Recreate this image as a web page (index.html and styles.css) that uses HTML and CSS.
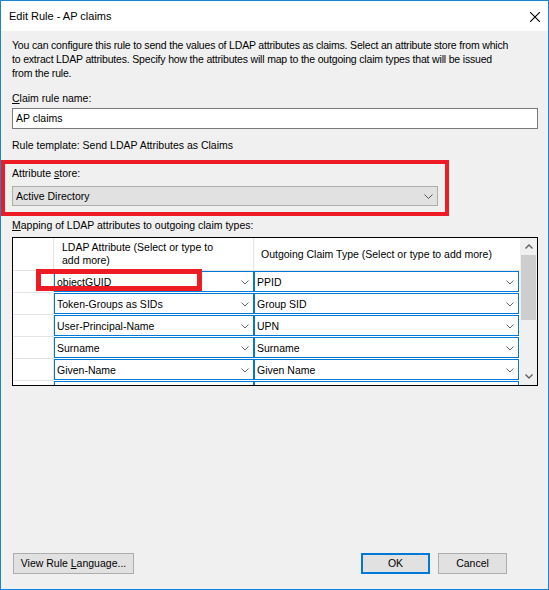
FILE: index.html
```html
<!DOCTYPE html>
<html>
<head>
<meta charset="utf-8">
<title>Edit Rule - AP claims</title>
<link rel="stylesheet" href="styles.css">
</head>
<body>
<div class="window">
  <div class="titlebar">
    <span class="title">Edit Rule - AP claims</span>
    <svg class="close" width="10" height="10" viewBox="0 0 10 10"><path d="M0 0L10 10M10 0L0 10" stroke="#000" stroke-width="1.1" fill="none"/></svg>
  </div>
  <div class="content">
    <p class="desc">You can configure this rule to send the values of LDAP attributes as claims. Select an attribute store from which<br>to extract LDAP attributes. Specify how the attributes will map to the outgoing claim types that will be issued<br>from the rule.</p>
    <div class="label label-name"><u>C</u>laim rule name:</div>
    <div class="textbox">AP claims</div>
    <div class="label label-template">Rule template: Send LDAP Attributes as Claims</div>
    <div class="store-group">
      <div class="label">Attribute <u>s</u>tore:</div>
      <div class="combo"><span>Active Directory</span><svg class="chev" width="9" height="5" viewBox="0 0 9 5"><path d="M0.5 0.5L4.5 4.5L8.5 0.5" stroke="#555" fill="none"/></svg></div>
      <div class="highlight hl-store"></div>
    </div>
    <div class="label label-map"><u>M</u>apping of LDAP attributes to outgoing claim types:</div>
    <div class="grid">
      <div class="grid-main">
        <div class="grid-head">
          <div class="rowhead"></div>
          <div class="colhead col1">LDAP Attribute (Select or type to add more)</div>
          <div class="colhead col2">Outgoing Claim Type (Select or type to add more)</div>
        </div>
        <div class="grid-row">
          <div class="rowhead"></div>
          <div class="cell col1"><span>objectGUID</span><svg class="chev-s" width="8" height="5" viewBox="0 0 8 5"><path d="M0.5 0.5L4 4L7.5 0.5" stroke="#666" fill="none"/></svg></div>
          <div class="cell col2"><span>PPID</span><svg class="chev-s" width="8" height="5" viewBox="0 0 8 5"><path d="M0.5 0.5L4 4L7.5 0.5" stroke="#666" fill="none"/></svg></div>
        </div>
        <div class="grid-row">
          <div class="rowhead"></div>
          <div class="cell col1"><span>Token-Groups as SIDs</span><svg class="chev-s" width="8" height="5" viewBox="0 0 8 5"><path d="M0.5 0.5L4 4L7.5 0.5" stroke="#666" fill="none"/></svg></div>
          <div class="cell col2"><span>Group SID</span><svg class="chev-s" width="8" height="5" viewBox="0 0 8 5"><path d="M0.5 0.5L4 4L7.5 0.5" stroke="#666" fill="none"/></svg></div>
        </div>
        <div class="grid-row">
          <div class="rowhead"></div>
          <div class="cell col1"><span>User-Principal-Name</span><svg class="chev-s" width="8" height="5" viewBox="0 0 8 5"><path d="M0.5 0.5L4 4L7.5 0.5" stroke="#666" fill="none"/></svg></div>
          <div class="cell col2"><span>UPN</span><svg class="chev-s" width="8" height="5" viewBox="0 0 8 5"><path d="M0.5 0.5L4 4L7.5 0.5" stroke="#666" fill="none"/></svg></div>
        </div>
        <div class="grid-row">
          <div class="rowhead"></div>
          <div class="cell col1"><span>Surname</span><svg class="chev-s" width="8" height="5" viewBox="0 0 8 5"><path d="M0.5 0.5L4 4L7.5 0.5" stroke="#666" fill="none"/></svg></div>
          <div class="cell col2"><span>Surname</span><svg class="chev-s" width="8" height="5" viewBox="0 0 8 5"><path d="M0.5 0.5L4 4L7.5 0.5" stroke="#666" fill="none"/></svg></div>
        </div>
        <div class="grid-row">
          <div class="rowhead"></div>
          <div class="cell col1"><span>Given-Name</span><svg class="chev-s" width="8" height="5" viewBox="0 0 8 5"><path d="M0.5 0.5L4 4L7.5 0.5" stroke="#666" fill="none"/></svg></div>
          <div class="cell col2"><span>Given Name</span><svg class="chev-s" width="8" height="5" viewBox="0 0 8 5"><path d="M0.5 0.5L4 4L7.5 0.5" stroke="#666" fill="none"/></svg></div>
        </div>
        <div class="grid-row">
          <div class="rowhead"></div>
          <div class="cell col1"><span>E-Mail-Addresses</span><svg class="chev-s" width="8" height="5" viewBox="0 0 8 5"><path d="M0.5 0.5L4 4L7.5 0.5" stroke="#666" fill="none"/></svg></div>
          <div class="cell col2"><span>E-Mail Address</span><svg class="chev-s" width="8" height="5" viewBox="0 0 8 5"><path d="M0.5 0.5L4 4L7.5 0.5" stroke="#666" fill="none"/></svg></div>
        </div>
      </div>
      <div class="scrollbar">
        <div class="sb-btn"><svg width="8" height="5" viewBox="0 0 8 5"><path d="M0.5 4.5L4 1L7.5 4.5" stroke="#606060" stroke-width="1.4" fill="none"/></svg></div>
        <div class="sb-track"><div class="sb-thumb"></div></div>
        <div class="sb-btn"><svg width="8" height="5" viewBox="0 0 8 5"><path d="M0.5 0.5L4 4L7.5 0.5" stroke="#606060" stroke-width="1.4" fill="none"/></svg></div>
      </div>
      <div class="highlight hl-guid"></div>
    </div>
    <div class="buttons">
      <div class="btn btn-view">View Rule <u>L</u>anguage...</div>
      <div class="btn-group">
        <div class="btn btn-ok">OK</div>
        <div class="btn btn-cancel">Cancel</div>
      </div>
    </div>
  </div>
</div>
</body>
</html>
```

FILE: styles.css
```css
* { box-sizing: border-box; }
html, body { margin: 0; padding: 0; }
body {
  width: 549px;
  height: 590px;
  font-family: "Liberation Sans", Arial, sans-serif;
  font-size: 10.5px;
  line-height: 14px;
  color: #000;
  background: #f0f0f0;
}
u { text-decoration-thickness: 1px; text-underline-offset: 1px; }
.window {
  width: 549px;
  height: 590px;
  border: 1px solid #1883d7;
  background: #f0f0f0;
  display: flex;
  flex-direction: column;
}
.titlebar {
  height: 30px;
  flex: none;
  background: #fff;
  display: flex;
  align-items: center;
  justify-content: space-between;
  padding: 0 8px 0 8px;
  font-size: 11px;
  line-height: 30px;
}
.close { display: block; margin-top: 1px; }
.content {
  flex: 1;
  display: flex;
  flex-direction: column;
  padding: 7px 10px 15px 11px;
}
.desc { margin: 0; letter-spacing: -0.18px; white-space: nowrap; }
.label { white-space: nowrap; }
.label-name { margin-top: 11px; }
.textbox {
  margin-top: 3px;
  height: 21px;
  border: 1px solid #7a7a7a;
  background: #fff;
  padding: 0 3px;
  line-height: 19px;
}
.label-template { margin-top: 9px; }
.store-group {
  position: relative;
  margin-top: 8px;
  padding: 6px 0 10px 0;
}
.combo {
  margin-top: 6px;
  width: 426px;
  height: 20px;
  background: #e1e1e1;
  border: 1px solid #adadad;
  padding: 0 4px 0 3px;
  line-height: 18px;
  display: flex;
  align-items: center;
  justify-content: space-between;
}
.chev { display: block; }
.highlight {
  position: absolute;
  border: 4px solid #ed1c24;
  pointer-events: none;
}
.hl-store { left: -11px; top: 0; width: 448px; height: 56px; }
.label-map { margin-top: 2px; }
.grid {
  position: relative;
  margin-top: 5px;
  height: 149px;
  border: 1px solid #000;
  display: flex;
  background: #fff;
}
.grid-main {
  flex: 1;
  display: flex;
  flex-direction: column;
  overflow: hidden;
}
.grid-head {
  height: 33px;
  flex: none;
  display: flex;
  border-bottom: 1px solid #e3e3e3;
  line-height: 13px;
}
.grid-head .rowhead { border-bottom: none; height: auto; }
.rowhead {
  width: 41px;
  flex: none;
  border-right: 1px solid #e3e3e3;
  border-bottom: 1px solid #e3e3e3;
  height: 22px;
}
.colhead {
  display: flex;
  align-items: center;
  padding: 0 8px;
}
.colhead.col1 { width: 200px; padding-right: 35px; border-right: 1px solid #e3e3e3; }
.colhead.col2 { width: 265px; padding-left: 7px; }
.grid-row {
  height: 22px;
  flex: none;
  display: flex;
}
.cell {
  height: 21px;
  border: 1px solid #0078d7;
  background: #fff;
  padding: 1px 4px 0 2px;
  line-height: 19px;
  display: flex;
  justify-content: space-between;
  align-items: flex-start;
  white-space: nowrap;
}
.cell.col1 { width: 200px; }
.cell.col2 { width: 265px; }
.chev-s { display: block; margin-top: 7px; }
.scrollbar {
  width: 17px;
  flex: none;
  background: #f0f0f0;
  display: flex;
  flex-direction: column;
}
.sb-btn {
  height: 17px;
  flex: none;
  display: flex;
  align-items: center;
  justify-content: center;
}
.sb-track { flex: 1; }
.sb-thumb {
  height: 65px;
  margin: 0 1px;
  background: #cdcdcd;
}
.hl-guid { left: 23px; top: 31px; width: 166px; height: 22px; border-width: 5px; }
.buttons {
  margin-top: auto;
  display: flex;
  justify-content: space-between;
  align-items: center;
}
.btn {
  height: 21px;
  border: 1px solid #adadad;
  background: #e1e1e1;
  line-height: 19px;
  text-align: center;
  white-space: nowrap;
}
.btn-view { width: 121px; margin-left: 1px; }
.btn-group { display: flex; gap: 8px; margin-right: 31px; }
.btn-ok { width: 69px; border: 2px solid #0078d7; line-height: 17px; }
.btn-cancel { width: 69px; }
```
